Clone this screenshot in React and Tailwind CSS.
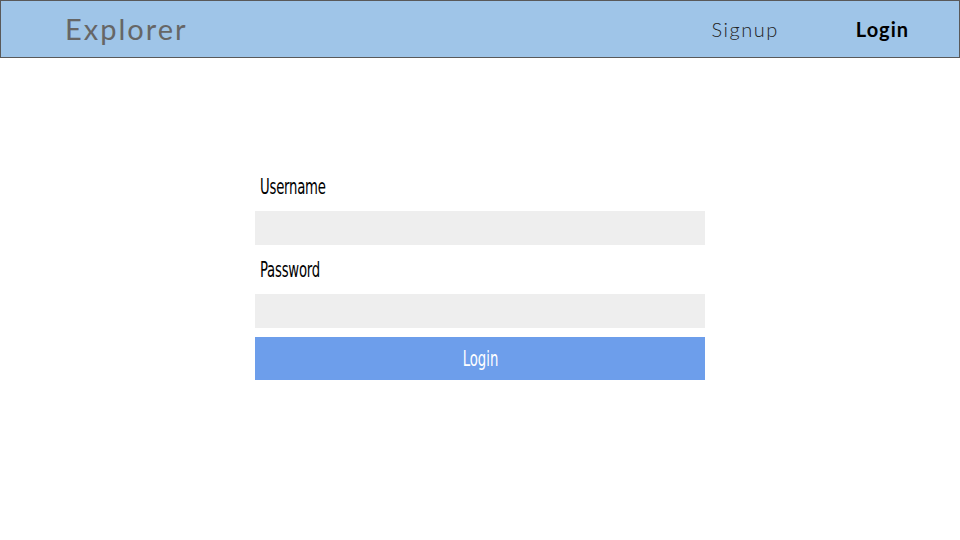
import React from "react";

function App() {
  return (
    <div className="w-[960px] h-[540px] bg-white">
      <nav className="h-[58px] flex items-center justify-between border border-[#595959] bg-[#9fc5e8] pl-[64px] pr-[50px]">
        <div className="text-[29px] tracking-[2px] text-[#666666] font-['Lato','Noto_Sans',sans-serif]">
          Explorer
        </div>
        <div className="flex items-center gap-[77px] text-[20px] font-['Lato','Noto_Sans',sans-serif]">
          <a className="text-[#222222] font-light tracking-[1.5px]">Signup</a>
          <a className="text-black font-bold tracking-[1px]">Login</a>
        </div>
      </nav>

      <form className="w-[450px] mx-auto mt-[117px] flex flex-col font-['DejaVu_Sans_Condensed','Liberation_Sans',sans-serif] text-[21px] leading-[24px]">
        <label className="pl-[5px] h-[36px] text-black">
          <span className="inline-block origin-left scale-x-[0.7] tracking-[-0.3px]">Username</span>
        </label>
        <input className="h-[34px] bg-[#eeeeee] outline-none" />
        <label className="pl-[5px] mt-[13px] h-[36px] text-black">
          <span className="inline-block origin-left scale-x-[0.7] tracking-[-0.3px]">Password</span>
        </label>
        <input type="password" className="h-[34px] bg-[#eeeeee] outline-none" />
        <button
          type="button"
          className="mt-[9px] h-[43px] bg-[#6d9eeb] text-white">
          <span className="inline-block scale-x-[0.7]">Login</span>
        </button>
      </form>
    </div>
  );
}

export default App;
